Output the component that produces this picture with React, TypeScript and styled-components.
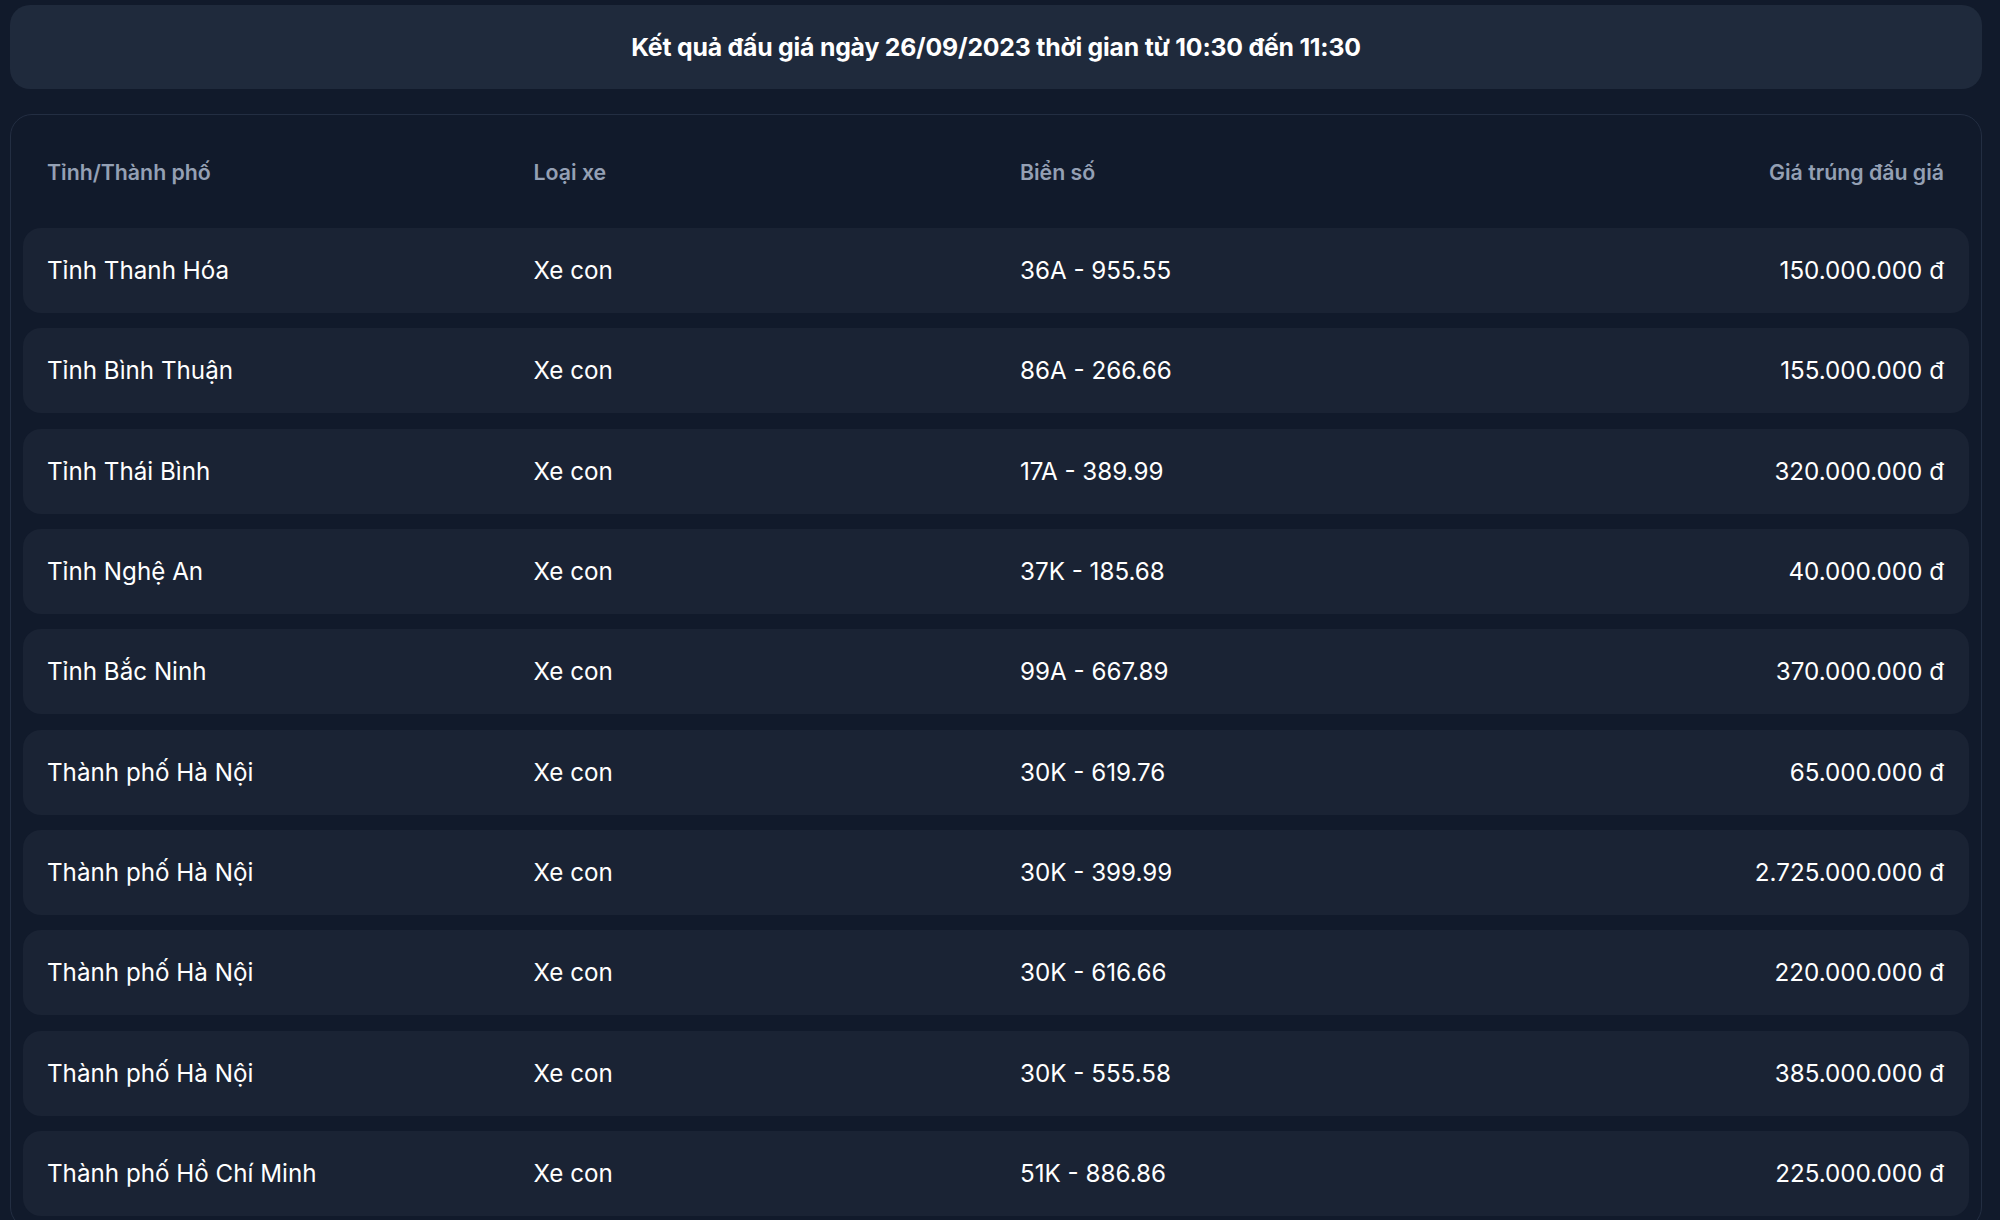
import React from "react";
import styled, { createGlobalStyle } from "styled-components";

const GlobalStyle = createGlobalStyle`
  html, body {
    margin: 0;
    padding: 0;
    background: #111a2b;
  }
  body {
    font-family: Inter, "Noto Sans", "Liberation Sans", sans-serif;
    color: #ffffff;
  }
  * { box-sizing: border-box; }
`;

const Page = styled.div`
  padding: 5px 18px 0 10px;
  display: flex;
  flex-direction: column;
  gap: 25px;
`;

const TitleBar = styled.div`
  height: 84px;
  border-radius: 20px;
  background: #1f2a3c;
  display: flex;
  align-items: center;
  justify-content: center;
`;

const Title = styled.h1`
  margin: 0;
  font-size: 24.8px;
  font-weight: 700;
  color: #ffffff;
  letter-spacing: -0.2px;
`;

const TableCard = styled.div`
  border: 1px solid #232e42;
  border-radius: 22px;
  padding: 0 12px 12px;
  background: #111a2b;
`;

const Grid = styled.div`
  display: flex;
  flex-direction: column;
  gap: 15.33px;
`;

const Row = styled.div<{ $head?: boolean }>`
  display: grid;
  grid-template-columns: repeat(4, 1fr);
  align-items: center;
  height: ${(p) => (p.$head ? "113px" : "85px")};
  padding-top: ${(p) => (p.$head ? "1px" : "0")};
  border-radius: 18px;
  background: ${(p) => (p.$head ? "transparent" : "#1a2334")};
  color: ${(p) => (p.$head ? "#94a0b4" : "#ffffff")};
  font-size: ${(p) => (p.$head ? "21.3px" : "24.2px")};
  font-weight: ${(p) => (p.$head ? 600 : 400)};
`;

const Cell = styled.div<{ $right?: boolean }>`
  padding: 0 25px 0 24px;
  text-align: ${(p) => (p.$right ? "right" : "left")};
  white-space: nowrap;
`;

const rows = [
  ["Tỉnh Thanh Hóa", "Xe con", "36A - 955.55", "150.000.000 đ"],
  ["Tỉnh Bình Thuận", "Xe con", "86A - 266.66", "155.000.000 đ"],
  ["Tỉnh Thái Bình", "Xe con", "17A - 389.99", "320.000.000 đ"],
  ["Tỉnh Nghệ An", "Xe con", "37K - 185.68", "40.000.000 đ"],
  ["Tỉnh Bắc Ninh", "Xe con", "99A - 667.89", "370.000.000 đ"],
  ["Thành phố Hà Nội", "Xe con", "30K - 619.76", "65.000.000 đ"],
  ["Thành phố Hà Nội", "Xe con", "30K - 399.99", "2.725.000.000 đ"],
  ["Thành phố Hà Nội", "Xe con", "30K - 616.66", "220.000.000 đ"],
  ["Thành phố Hà Nội", "Xe con", "30K - 555.58", "385.000.000 đ"],
  ["Thành phố Hồ Chí Minh", "Xe con", "51K - 886.86", "225.000.000 đ"],
];

export default function App() {
  return (
    <>
      <GlobalStyle />
      <Page>
        <TitleBar>
          <Title>Kết quả đấu giá ngày 26/09/2023 thời gian từ 10:30 đến 11:30</Title>
        </TitleBar>
        <TableCard>
          <Row $head>
            <Cell>Tỉnh/Thành phố</Cell>
            <Cell>Loại xe</Cell>
            <Cell>Biển số</Cell>
            <Cell $right>Giá trúng đấu giá</Cell>
          </Row>
          <Grid>
            {rows.map((r, i) => (
              <Row key={i}>
                <Cell>{r[0]}</Cell>
                <Cell>{r[1]}</Cell>
                <Cell>{r[2]}</Cell>
                <Cell $right>{r[3]}</Cell>
              </Row>
            ))}
          </Grid>
        </TableCard>
      </Page>
    </>
  );
}
